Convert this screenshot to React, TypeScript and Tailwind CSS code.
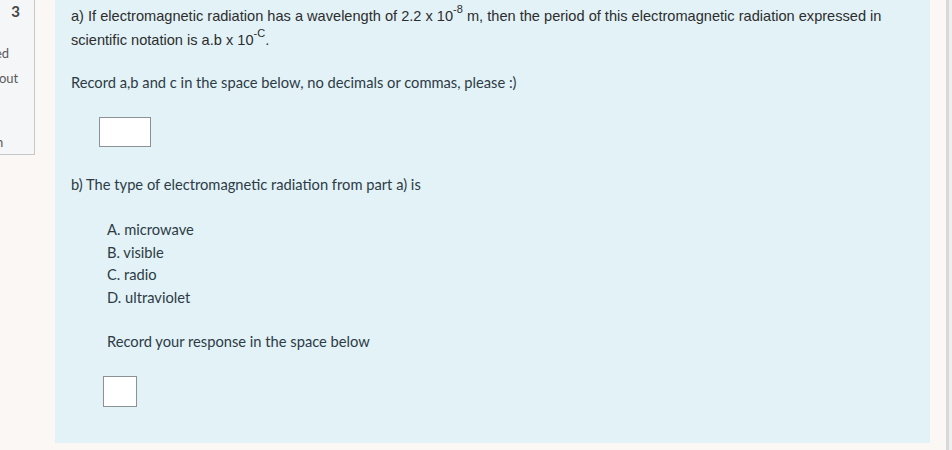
import React from 'react';

const arial = { fontFamily: '"Liberation Sans", Arial, sans-serif' };

const Box: React.FC<{ className: string }> = ({ className }) => (
  <div className={`border border-[#8b9196] bg-white ${className}`} />
);

const App: React.FC = () => {
  const options = ['A. microwave', 'B. visible', 'C. radio', 'D. ultraviolet'];

  return (
    <div className="flex h-[450px] w-[952px] overflow-hidden bg-[#fbf7f4] font-['Lato',sans-serif] text-[#2d3b45]">
      {/* Sidebar stub */}
      <div className="h-[155px] w-[35px] shrink-0 overflow-hidden border-r border-b border-[#c7c7c7] bg-[#f5f6f8] text-[13px] text-[#5a5a5a]">
        <div className="pr-[14px] pt-[1px] text-right text-[15px] font-bold leading-[20px] text-[#444]">3</div>
        <div className="-ml-[5px] mt-[22px] leading-[20px]">ed</div>
        <div className="-ml-[1px] mt-[5px] leading-[20px]">out</div>
        <div className="-ml-[4px] mt-[44px] leading-[20px]">n</div>
      </div>

      {/* Question panel */}
      <div className="ml-[20px] h-[443px] w-[875px] shrink-0 bg-[#e2f2f7] pl-[16px] pr-[20px] text-[14.7px]">
        <p className="pt-[4px] text-[14.6px] leading-[24px] text-[#2d2d2d]" style={arial}>
          a) If electromagnetic radiation has a wavelength of 2.2 x 10
          <sup className="relative -top-[8px] text-[11px]">-8</sup> m, then the period of this electromagnetic
          radiation expressed in scientific notation is a.b x 10
          <sup className="relative -top-[8px] text-[11px]">-C</sup>.
        </p>

        <p className="mt-[20px] leading-[20px]">
          Record a,b and c in the space below, no decimals or commas, please :)
        </p>

        <Box className="ml-[28px] mt-[25px] h-[30px] w-[52px]" />

        <p className="mt-[27px] leading-[20px]">b) The type of electromagnetic radiation from part a) is</p>

        <ul className="ml-[36px] mt-[24px] leading-[22.5px]">
          {options.map((o) => (
            <li key={o}>{o}</li>
          ))}
        </ul>

        <p className="ml-[36px] mt-[23px] leading-[20px]">Record your response in the space below</p>

        <Box className="ml-[32px] mt-[25px] h-[31px] w-[34px]" />
      </div>

      {/* Right scroll edge */}
      <div className="ml-[16px] h-full w-[3px] shrink-0 bg-[#d9d9d9]" />
      <div className="h-full flex-1 bg-[#efefef]" />
    </div>
  );
};

export default App;
